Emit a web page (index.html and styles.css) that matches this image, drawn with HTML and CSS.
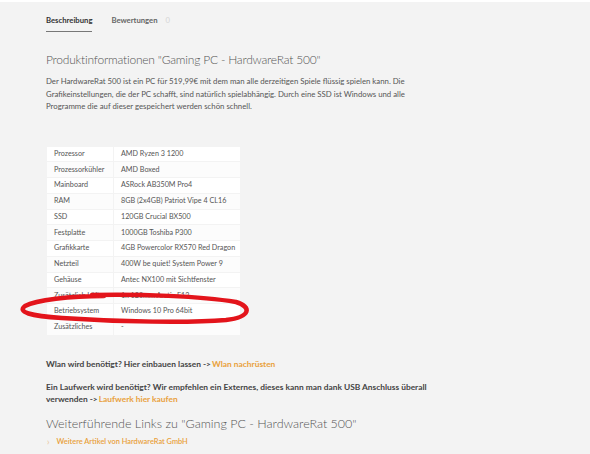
FILE: index.html
```html
<!DOCTYPE html>
<html lang="de">
<head>
<meta charset="utf-8">
<link rel="stylesheet" href="styles.css">
</head>
<body>
<div class="page">
  <nav class="tabs">
    <span class="tab active">Beschreibung</span>
    <span class="tab">Bewertungen <span class="count">0</span></span>
  </nav>
  <h2 class="title">Produktinformationen "Gaming PC - HardwareRat 500"</h2>
  <p class="desc">Der HardwareRat 500 ist ein PC für 519,99€ mit dem man alle derzeitigen Spiele flüssig spielen kann. Die Grafikeinstellungen, die der PC schafft, sind natürlich spielabhängig. Durch eine SSD ist Windows und alle Programme die auf dieser gespeichert werden schön schnell.</p>
  <table class="specs">
    <tr><td>Prozessor</td><td>AMD Ryzen 3 1200</td></tr>
    <tr><td>Prozessorkühler</td><td>AMD Boxed</td></tr>
    <tr><td>Mainboard</td><td>ASRock AB350M Pro4</td></tr>
    <tr><td>RAM</td><td>8GB (2x4GB) Patriot Vipe 4 CL16</td></tr>
    <tr><td>SSD</td><td>120GB Crucial BX500</td></tr>
    <tr><td>Festplatte</td><td>1000GB Toshiba P300</td></tr>
    <tr><td>Grafikkarte</td><td>4GB Powercolor RX570 Red Dragon</td></tr>
    <tr><td>Netzteil</td><td>400W be quiet! System Power 9</td></tr>
    <tr><td>Gehäuse</td><td>Antec NX100 mit Sichtfenster</td></tr>
    <tr><td>Zusätzlich Lüfter</td><td>1x 120mm Arctic F12</td></tr>
    <tr><td>Betriebsystem</td><td>Windows 10 Pro 64bit</td></tr>
    <tr><td>Zusätzliches</td><td>-</td></tr>
  </table>
  <p class="note">Wlan wird benötigt? Hier einbauen lassen -&gt;<a class="link">Wlan nachrüsten</a></p>
  <p class="note">Ein Laufwerk wird benötigt? Wir empfehlen ein Externes, dieses kann man dank USB Anschluss überall verwenden -&gt;<a class="link">Laufwerk hier kaufen</a></p>
  <h2 class="title sub">Weiterführende Links zu "Gaming PC - HardwareRat 500"</h2>
  <div class="more"><span class="chev">›</span><a class="link small">Weitere Artikel von HardwareRat GmbH</a></div>
</div>
<svg class="markup" width="590" height="454" viewBox="0 0 590 454">
  <path d="M104 296 C 70 296, 36 300, 25 306 C 17 312, 30 316, 62 318 C 120 322, 190 323, 226 320 C 251 317, 252 307, 236 302 C 200 296, 140 294, 92 295" fill="none" stroke="#e3141b" stroke-width="4.5" stroke-linecap="round"/>
</svg>
</body>
</html>
```
FILE: styles.css
```css
html, body {
  margin: 0;
  padding: 0;
  background: #f3f3f3;
  font-family: Lato, "Open Sans", sans-serif;
  color: #555;
  overflow: hidden;
}
body {
  border-top: 2px solid #fff;
}
.page {
  padding: 0 40px 0 46px;
}
.tabs {
  display: flex;
  gap: 19px;
  padding-top: 13px;
  font-size: 7.7px;
  font-weight: 700;
  line-height: 10px;
}
.tab {
  color: #666;
  padding-bottom: 6px;
  display: inline-block;
}
.tab.active {
  color: #333;
  border-bottom: 1px solid #777;
}
.count {
  color: #d6d6d6;
  margin-left: 6px;
  font-weight: 400;
}
.title {
  font-weight: 300;
  font-size: 12px;
  letter-spacing: -0.2px;
  color: #555;
  margin: 19px 0 0 0;
  line-height: 18px;
}
.desc {
  font-size: 7.8px;
  line-height: 12.5px;
  margin: 6px 0 0 0;
  max-width: 372px;
  color: #555;
}
.specs {
  border-collapse: collapse;
  width: 195px;
  margin-top: 33px;
  font-size: 7.2px;
  color: #555;
}
.specs td {
  background: #fff;
  height: 14.75px;
  padding: 0 0 0 7px;
  border: 1px solid #f3f3f3;
  white-space: nowrap;
  line-height: 12px;
}
.specs td:first-child {
  width: 59px;
}
.specs tr:nth-child(even) td {
  background: #fcfcfc;
}
.markup {
  position: absolute;
  left: 0;
  top: 0;
  pointer-events: none;
}
.note {
  font-size: 8.4px;
  font-weight: 700;
  line-height: 12px;
  color: #444;
  margin: 22px 0 0 0;
  max-width: 410px;
}
.note + .note {
  margin-top: 11px;
}
.link {
  color: #e9a13b;
  font-weight: 700;
  margin-left: 1px;
}
.title.sub {
  font-size: 12.5px;
  letter-spacing: 0;
  line-height: 16px;
  margin-top: 11px;
}
.more {
  margin-top: 5px;
  font-size: 7.4px;
  line-height: 10px;
  display: flex;
  align-items: center;
}
.chev {
  color: #e8c594;
  font-size: 9px;
  margin: 0 7px 0 1px;
}
.link.small {
  font-weight: 600;
  margin-left: 0;
}
```
